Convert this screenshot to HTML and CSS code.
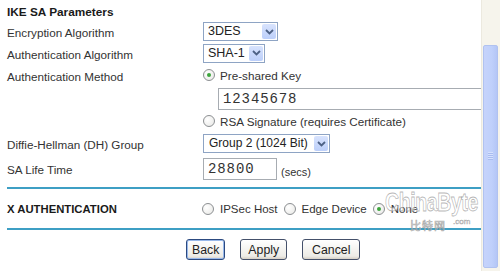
FILE: index.html
```html
<!DOCTYPE html>
<html>
<head>
<meta charset="utf-8">
<link rel="stylesheet" href="styles.css">
</head>
<body>
<div class="page">
  <main class="content">
    <div class="form">
      <div class="heading">IKE SA Parameters</div><div></div>

      <div class="label">Encryption Algorithm</div>
      <div class="field"><div class="select w75"><span class="val">3DES</span><span class="btn"><svg width="9" height="6" viewBox="0 0 9 6"><path d="M1 1 L4.5 4.5 L8 1" fill="none" stroke="#4d6185" stroke-width="1.8"/></svg></span></div></div>

      <div class="label">Authentication Algorithm</div>
      <div class="field"><div class="select w62"><span class="val">SHA-1</span><span class="btn"><svg width="9" height="6" viewBox="0 0 9 6"><path d="M1 1 L4.5 4.5 L8 1" fill="none" stroke="#4d6185" stroke-width="1.8"/></svg></span></div></div>

      <div class="label">Authentication Method</div>
      <div class="field"><span class="radio checked"></span><span class="rlabel">Pre-shared Key</span></div>

      <div></div>
      <div class="field indent"><div class="textbox wide">12345678</div></div>

      <div></div>
      <div class="field"><span class="radio"></span><span class="rlabel">RSA Signature (requires Certificate)</span></div>

      <div class="label">Diffie-Hellman (DH) Group</div>
      <div class="field"><div class="select w127"><span class="val">Group 2 (1024 Bit)</span><span class="btn"><svg width="9" height="6" viewBox="0 0 9 6"><path d="M1 1 L4.5 4.5 L8 1" fill="none" stroke="#4d6185" stroke-width="1.8"/></svg></span></div></div>

      <div class="label">SA Life Time</div>
      <div class="field"><div class="textbox short">28800</div><span class="unit">(secs)</span></div>
    </div>

    <div class="divider"></div>

    <div class="xauth">
      <div class="heading">X AUTHENTICATION</div>
      <div class="options">
        <span class="radio"></span><span class="rlabel">IPSec Host</span>
        <span class="radio"></span><span class="rlabel">Edge Device</span>
        <span class="radio checked"></span><span class="rlabel">None</span>
      </div>
    </div>

    <div class="divider"></div>

    <div class="buttons">
      <button class="btnx focus">Back</button>
      <button class="btnx">Apply</button>
      <button class="btnx">Cancel</button>
    </div>
  </main>
  <div class="scrollbar"><div class="thumb"><span class="grip"></span></div></div>
  <div class="watermark"><span class="wm-main">ChinaByte</span><span class="wm-cn">比特网</span><span class="wm-com">.com</span></div>
</div>
</body>
</html>
```

FILE: styles.css
```css
html, body {
  margin: 0;
  padding: 0;
  background: #ffffff;
}
body {
  font-family: "Liberation Sans", Arial, sans-serif;
  font-size: 11.7px;
  color: #222;
  width: 500px;
  height: 271px;
  overflow: hidden;
}
.page {
  position: relative;
  display: flex;
  width: 500px;
  height: 271px;
}
.content {
  width: 481px;
  overflow: hidden;
  flex: none;
}
.form {
  display: grid;
  grid-template-columns: 196px 600px;
  grid-template-rows: 21px 21px 22px 22px 25px 20px 25px 25px;
  padding-left: 7px;
  align-items: center;
}
.heading {
  font-weight: bold;
  font-size: 11.8px;
  color: #1a1a1a;
  padding-top: 2px;
}
.label {
  color: #333;
  padding-top: 2px;
}
.field {
  display: flex;
  align-items: center;
}
.indent {
  padding-left: 15px;
}
.select {
  display: flex;
  align-items: stretch;
  height: 17px;
  border: 1px solid #8ea4c4;
  background: #fff;
  box-sizing: content-box;
}
.w75 { width: 73px; }
.w62 { width: 60px; }
.w127 { width: 125px; }
.select .val {
  flex: 1;
  font-size: 12.5px;
  line-height: 17px;
  padding-left: 4px;
  color: #222;
  white-space: nowrap;
  overflow: hidden;
}
.w127 .val {
  font-size: 12px;
  padding-left: 5px;
}
.select .btn {
  width: 14px;
  margin: 1px;
  background: linear-gradient(#d8e3fd, #bccffa);
  border-radius: 2px;
  display: flex;
  align-items: center;
  justify-content: center;
}
.radio {
  display: inline-block;
  width: 10px;
  height: 10px;
  border-radius: 50%;
  border: 1px solid #8c8f92;
  background: radial-gradient(circle at 35% 35%, #ffffff, #e7e7e4);
  position: relative;
  flex: none;
}
.radio.checked::after {
  content: "";
  position: absolute;
  left: 3px;
  top: 3px;
  width: 4px;
  height: 4px;
  border-radius: 50%;
  background: #3da43d;
}
.rlabel {
  margin-left: 5px;
  color: #333;
}
.textbox {
  height: 20px;
  border: 1px solid #a7acb2;
  font-family: "Liberation Mono", "Courier New", monospace;
  font-size: 14px;
  letter-spacing: 0.9px;
  line-height: 20px;
  padding-left: 4px;
  color: #333;
  box-sizing: content-box;
}
.wide { width: 320px; }
.short { width: 68px; }
.unit {
  margin-left: 4px;
  padding-top: 6px;
  font-size: 11px;
  color: #333;
}
.divider {
  height: 2px;
  background: #3e9fc4;
  margin-left: 7px;
}
.form + .divider {
  margin-top: 6px;
}
.xauth {
  display: grid;
  grid-template-columns: 195px 1fr;
  align-items: center;
  height: 39px;
  padding-left: 7px;
}
.xauth .heading {
  padding-top: 0;
  font-size: 11.3px;
}
.options {
  display: flex;
  align-items: center;
}
.options .rlabel {
  margin-right: 6px;
  margin-left: 6px;
  font-size: 11.5px;
}
.buttons {
  display: flex;
  padding-top: 9px;
  padding-left: 186px;
  gap: 15px;
}
.btnx {
  height: 21px;
  padding: 0 5px;
  font-family: "Liberation Sans", Arial, sans-serif;
  font-size: 12.3px;
  color: #222;
  background: linear-gradient(#ffffff, #ecebe6 85%, #d6d0c5);
  border: 1px solid #44506a;
  border-radius: 3px;
}
.btnx:nth-child(2) { padding: 0 7px; }
.btnx:nth-child(3) { padding: 0 9px; }
.btnx.focus {
  box-shadow: inset 0 0 0 1px #98b8ea;
  border-color: #2c4a80;
}
.scrollbar {
  width: 19px;
  flex: none;
  background: #f6f4ec;
  border-left: 1px solid #ece9df;
  position: relative;
}
.thumb {
  position: absolute;
  left: 1px;
  right: 3px;
  top: 45px;
  bottom: 3px;
  background: linear-gradient(90deg, #c6d3fb, #bfd0fb 60%, #b4c6f6);
  border: 1px solid #b0c2f0;
  border-radius: 2px;
}
.grip {
  position: absolute;
  left: 4px;
  right: 4px;
  top: 106px;
  height: 8px;
  background: repeating-linear-gradient(#d6e1fd 0 1px, #a9bcf0 1px 2px);
}
.watermark {
  position: absolute;
  left: 385px;
  top: 189px;
  width: 95px;
  height: 50px;
  pointer-events: none;
}
.wm-main {
  position: absolute;
  left: 0;
  top: 0;
  font-family: "Liberation Sans", Arial, sans-serif;
  font-size: 25px;
  line-height: 26px;
  font-weight: bold;
  letter-spacing: -0.5px;
  transform: scaleX(0.78);
  transform-origin: left top;
  white-space: nowrap;
  color: rgba(255, 255, 255, 0.55);
  -webkit-text-stroke: 0.8px rgba(150, 150, 150, 0.7);
}
.wm-cn {
  position: absolute;
  left: 25px;
  top: 30px;
  font-family: "Noto Sans CJK SC", sans-serif;
  font-size: 11px;
  line-height: 12px;
  letter-spacing: 1px;
  color: rgba(255, 255, 255, 0.5);
  -webkit-text-stroke: 0.7px rgba(150, 150, 150, 0.75);
}
.wm-com {
  position: absolute;
  left: 68px;
  top: 28px;
  font-size: 8px;
  line-height: 9px;
  color: rgba(255, 255, 255, 0.5);
  -webkit-text-stroke: 0.5px rgba(150, 150, 150, 0.8);
}
```
